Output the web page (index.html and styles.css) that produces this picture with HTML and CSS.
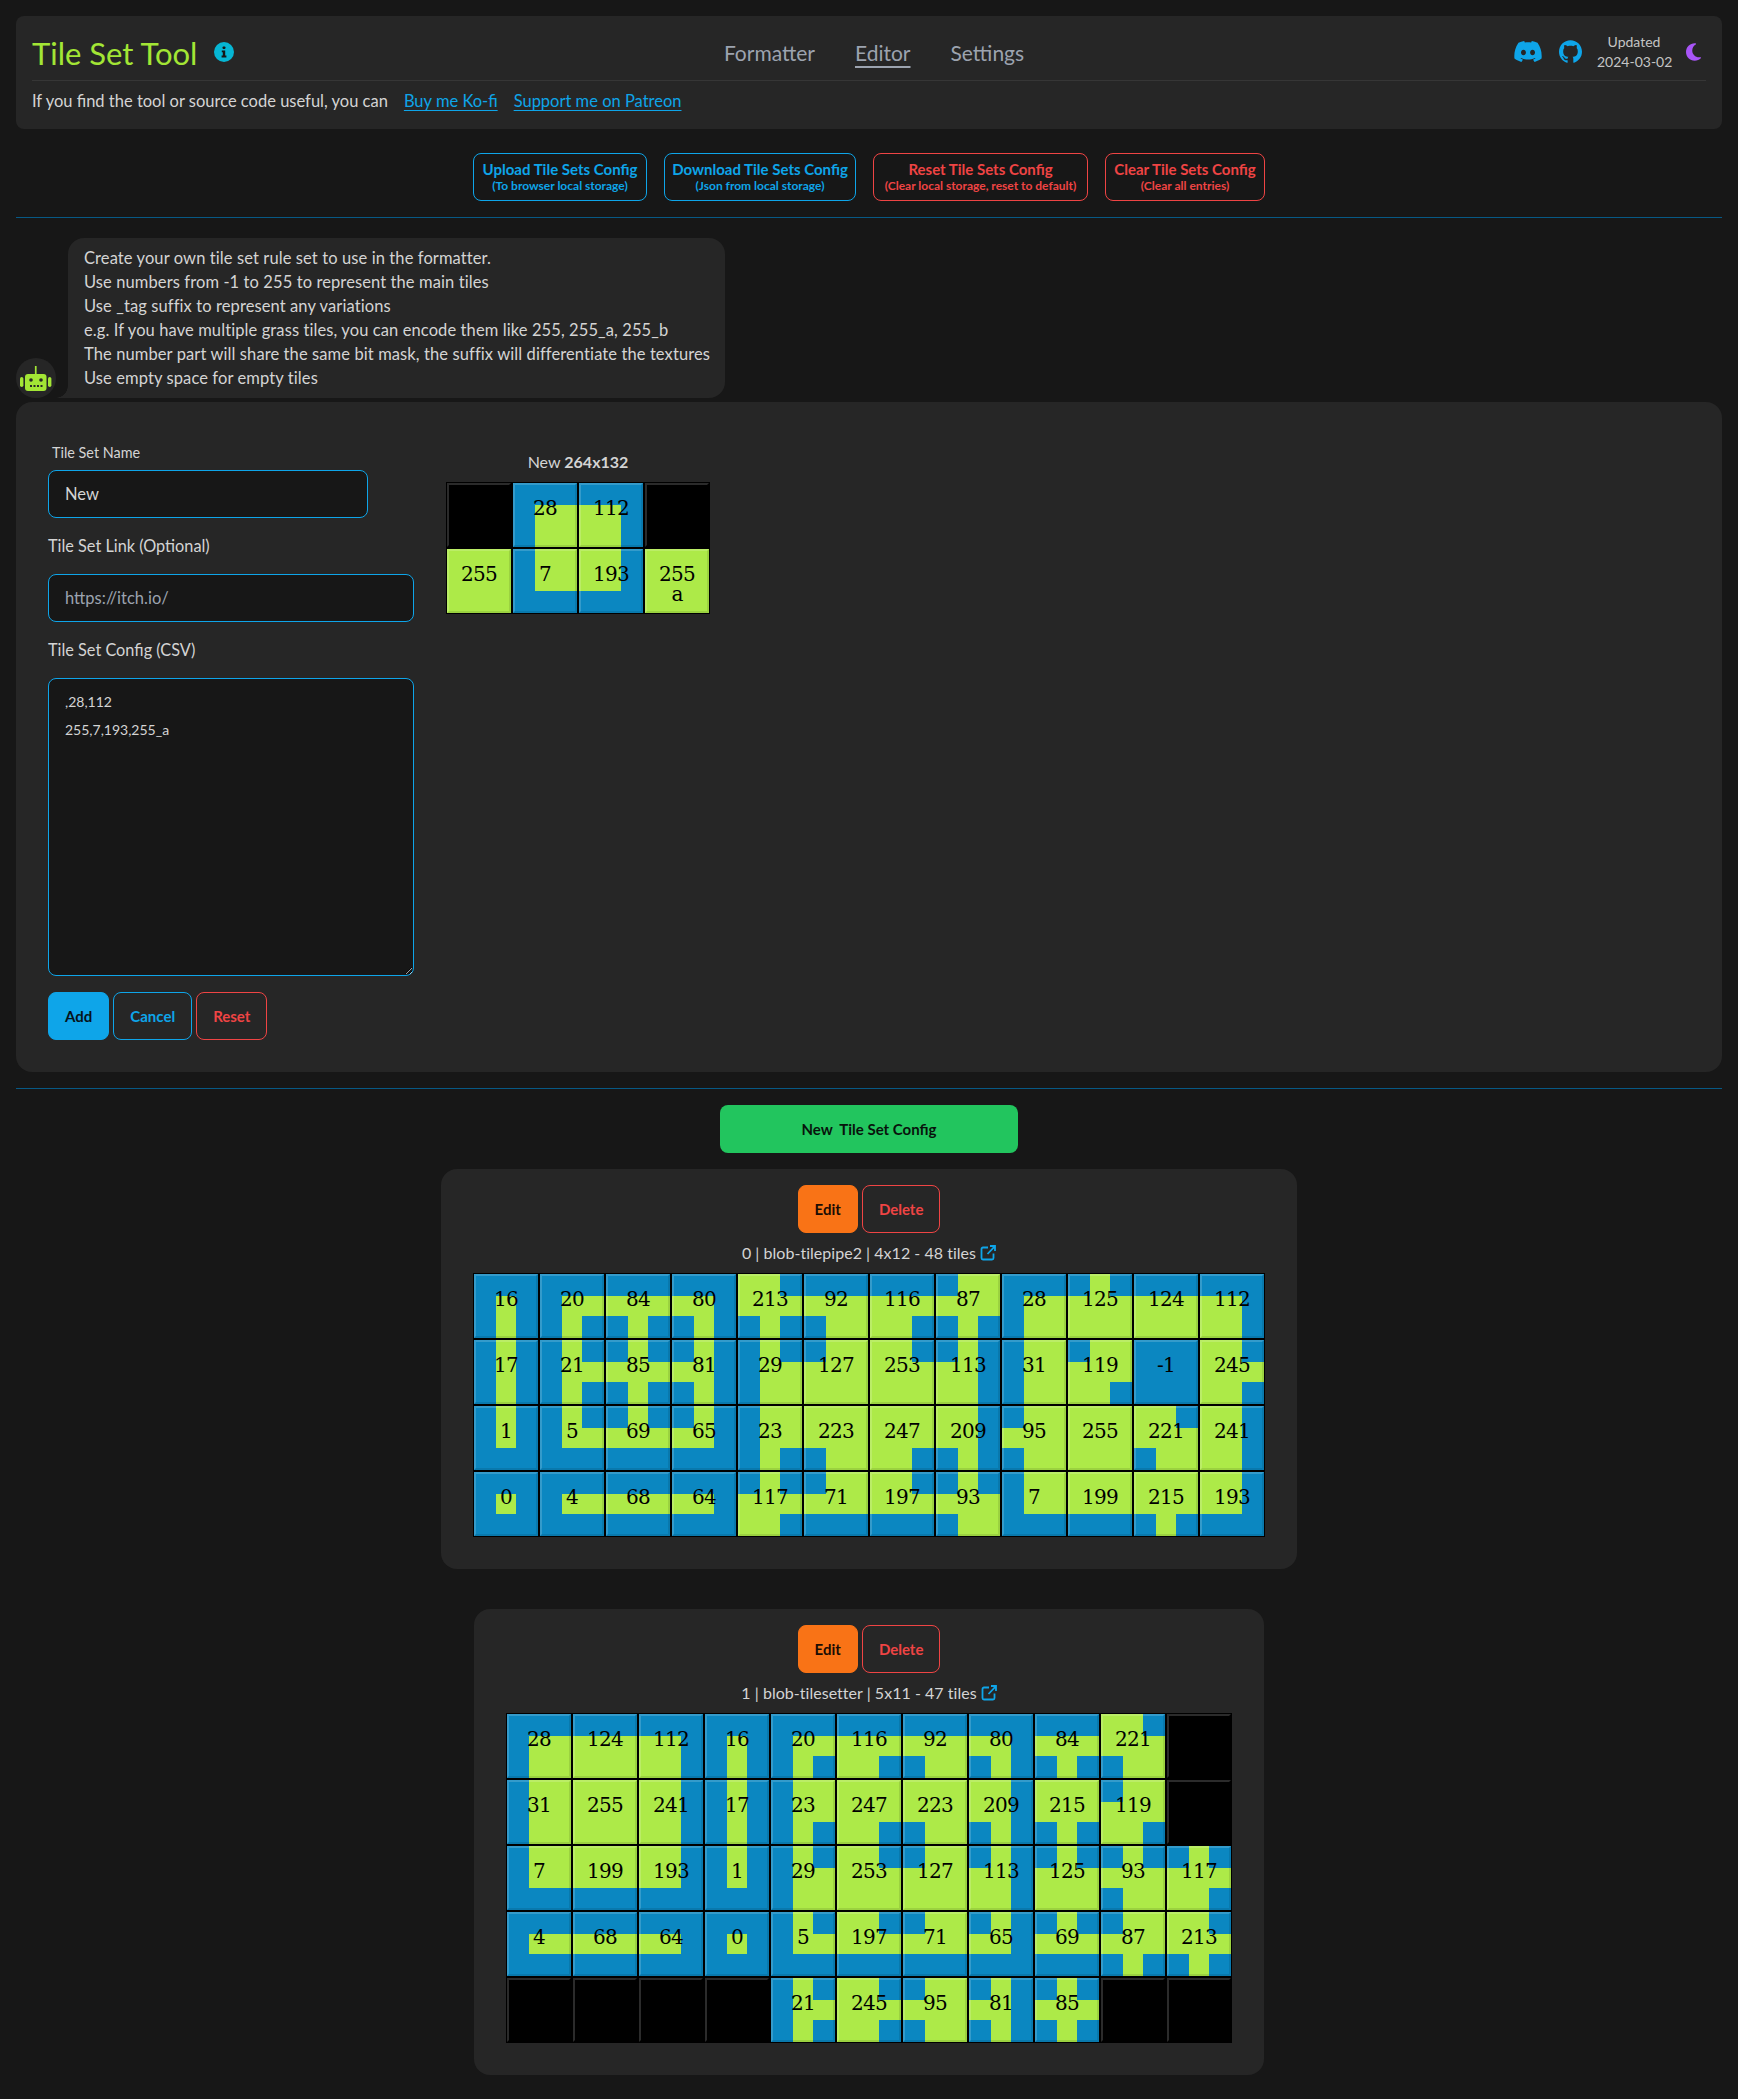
FILE: index.html
```html
<!DOCTYPE html>
<html lang="en">
<head>
<meta charset="utf-8">
<title>Tile Set Tool</title>
<link rel="stylesheet" href="styles.css">
</head>
<body>
<header class="topbar">
  <div class="topbar-main">
    <div class="brand">
      <h1 class="brand-title">Tile Set Tool</h1>
      <svg class="icon-info" viewBox="0 0 20 20"><circle cx="10" cy="10" r="10" fill="#06b6d4"/><rect x="8.6" y="4.4" width="2.8" height="2.6" rx=".8" fill="#171717"/><path d="M7.8 8.4h3.4v5.2h1.2v1.8H7.6v-1.8h1.2v-3.4h-1z" fill="#171717"/></svg>
    </div>
    <nav class="nav">
      <a class="nav-link">Formatter</a>
      <a class="nav-link nav-link-active">Editor</a>
      <a class="nav-link">Settings</a>
    </nav>
    <div class="topbar-right">
      <svg class="icon-discord" viewBox="0 2.8 24 18.4"><path fill="#0ea5e9" d="M20.317 4.3698a19.7913 19.7913 0 00-4.8851-1.5152.0741.0741 0 00-.0785.0371c-.211.3753-.4447.8648-.6083 1.2495-1.8447-.2762-3.68-.2762-5.4868 0-.1636-.3933-.4058-.8742-.6177-1.2495a.077.077 0 00-.0785-.037 19.7363 19.7363 0 00-4.8852 1.515.0699.0699 0 00-.0321.0277C.5334 9.0458-.319 13.5799.0992 18.0578a.0824.0824 0 00.0312.0561c2.0528 1.5076 4.0413 2.4228 5.9929 3.0294a.0777.0777 0 00.0842-.0276c.4616-.6304.8731-1.2952 1.226-1.9942a.076.076 0 00-.0416-.1057c-.6528-.2476-1.2743-.5495-1.8722-.8923a.077.077 0 01-.0076-.1277c.1258-.0943.2517-.1923.3718-.2914a.0743.0743 0 01.0776-.0105c3.9278 1.7933 8.18 1.7933 12.0614 0a.0739.0739 0 01.0785.0095c.1202.099.246.1981.3728.2924a.077.077 0 01-.0066.1276 12.2986 12.2986 0 01-1.873.8914.0766.0766 0 00-.0407.1067c.3604.698.7719 1.3628 1.225 1.9932a.076.076 0 00.0842.0286c1.961-.6067 3.9495-1.5219 6.0023-3.0294a.077.077 0 00.0313-.0552c.5004-5.177-.8382-9.6739-3.5485-13.6604a.061.061 0 00-.0312-.0286zM8.02 15.3312c-1.1825 0-2.1569-1.0857-2.1569-2.419 0-1.3332.9555-2.4189 2.157-2.4189 1.2108 0 2.1757 1.0952 2.1568 2.419 0 1.3332-.9555 2.4189-2.1569 2.4189zm7.9748 0c-1.1825 0-2.1569-1.0857-2.1569-2.419 0-1.3332.9554-2.4189 2.1569-2.4189 1.2108 0 2.1757 1.0952 2.1568 2.419 0 1.3332-.946 2.4189-2.1568 2.4189Z"/></svg>
      <svg class="icon-github" viewBox="0 0 24 24"><path fill="#0ea5e9" d="M12 .297c-6.63 0-12 5.373-12 12 0 5.303 3.438 9.8 8.205 11.385.6.113.82-.258.82-.577 0-.285-.01-1.04-.015-2.04-3.338.724-4.042-1.61-4.042-1.61C4.422 18.07 3.633 17.7 3.633 17.7c-1.087-.744.084-.729.084-.729 1.205.084 1.838 1.236 1.838 1.236 1.07 1.835 2.809 1.305 3.495.998.108-.776.417-1.305.76-1.605-2.665-.3-5.466-1.332-5.466-5.93 0-1.31.465-2.38 1.235-3.22-.135-.303-.54-1.523.105-3.176 0 0 1.005-.322 3.3 1.23.96-.267 1.98-.399 3-.405 1.02.006 2.04.138 3 .405 2.28-1.552 3.285-1.23 3.285-1.23.645 1.653.24 2.873.12 3.176.765.84 1.23 1.91 1.23 3.22 0 4.61-2.805 5.625-5.475 5.92.42.36.81 1.096.81 2.22 0 1.606-.015 2.896-.03 3.286 0 .315.21.69.825.57C20.565 22.092 24 17.592 24 12.297c0-6.627-5.373-12-12-12"/></svg>
      <div class="updated">Updated<br>2024-03-02</div>
      <svg class="icon-moon" viewBox="0 0 384 512"><path fill="#a855f7" d="M223.5 32C100 32 0 132.3 0 256S100 480 223.5 480c60.6 0 115.5-24.2 155.8-63.4c5-4.9 6.3-12.5 3.1-18.7s-10.1-9.7-17-8.5c-9.8 1.7-19.8 2.6-30.1 2.6c-96.9 0-175.5-78.8-175.5-176c0-65.8 36-123.1 89.3-153.3c6.1-3.5 9.2-10.5 7.7-17.3s-7.3-11.9-14.3-12.5c-6.3-.5-12.6-.8-19-.8z"/></svg>
    </div>
  </div>
  <div class="topbar-sub">
    <span>If you find the tool or source code useful, you can</span>
    <a class="link">Buy me Ko-fi</a>
    <a class="link">Support me on Patreon</a>
  </div>
</header>

<section class="actions">
  <button class="btn-config btn-config-sky btn-upload">Upload Tile Sets Config<small>(To browser local storage)</small></button>
  <button class="btn-config btn-config-sky btn-download">Download Tile Sets Config<small>(Json from local storage)</small></button>
  <button class="btn-config btn-config-red btn-reset">Reset Tile Sets Config<small>(Clear local storage, reset to default)</small></button>
  <button class="btn-config btn-config-red btn-clear">Clear Tile Sets Config<small>(Clear all entries)</small></button>
</section>

<hr class="rule">

<section class="chat">
  <div class="avatar">
    <svg viewBox="0 0 40 40" class="avatar-icon">
      <rect x="18.9" y="8" width="1.7" height="9" fill="#a3e635"/>
      <rect x="4" y="19" width="3.4" height="10" rx="1.7" fill="#a3e635"/>
      <rect x="32" y="19" width="3.4" height="10" rx="1.7" fill="#a3e635"/>
      <rect x="9" y="16" width="21.5" height="17" rx="3" fill="#a3e635"/>
      <circle cx="15" cy="22" r="1.8" fill="#262626"/>
      <circle cx="25" cy="22" r="1.8" fill="#262626"/>
      <rect x="14" y="27" width="2" height="2" fill="#262626"/>
      <rect x="17.5" y="27" width="2" height="2" fill="#262626"/>
      <rect x="21" y="27" width="2" height="2" fill="#262626"/>
      <rect x="24.5" y="27" width="2" height="2" fill="#262626"/>
    </svg>
  </div>
  <div class="bubble">
    <p>Create your own tile set rule set to use in the formatter.</p>
    <p>Use numbers from -1 to 255 to represent the main tiles</p>
    <p>Use _tag suffix to represent any variations</p>
    <p>e.g. If you have multiple grass tiles, you can encode them like 255, 255_a, 255_b</p>
    <p>The number part will share the same bit mask, the suffix will differentiate the textures</p>
    <p>Use empty space for empty tiles</p>
  </div>
</section>

<section class="editor">
  <form class="editor-form">
    <label class="label-small" for="f-name">Tile Set Name</label>
    <input id="f-name" class="field field-name" value="New">
    <label class="label" for="f-link">Tile Set Link (Optional)</label>
    <input id="f-link" class="field" placeholder="https://itch.io/">
    <label class="label" for="f-csv">Tile Set Config (CSV)</label>
    <textarea id="f-csv" class="field field-area" spellcheck="false">,28,112
255,7,193,255_a</textarea>
    <div class="form-buttons">
      <button type="button" class="btn btn-sky-solid">Add</button>
      <button type="button" class="btn btn-sky-line">Cancel</button>
      <button type="button" class="btn btn-red-line">Reset</button>
    </div>
  </form>
  <div class="preview">
    <div class="preview-caption">New <b>264x132</b></div>
    <div class="tiles" data-cols="4" data-tiles=",28,112,,255,7,193,255_a"></div>
  </div>
</section>

<hr class="rule rule-second">

<div class="new-row"><button class="btn-new">New&nbsp; Tile Set Config</button></div>

<article class="card">
  <div class="card-buttons">
    <button class="btn btn-orange">Edit</button>
    <button class="btn btn-red-line">Delete</button>
  </div>
  <div class="card-caption">0 | blob-tilepipe2 | 4x12 - 48 tiles
    <svg class="icon-ext" viewBox="0 0 16 16"><path d="M8 2.5H3a1.5 1.5 0 0 0-1.5 1.5v9A1.5 1.5 0 0 0 3 14.5h9a1.5 1.5 0 0 0 1.5-1.5V8.5M7.5 9 15 1.2M10 1h5v5" fill="none" stroke="#0ea5e9" stroke-width="1.8"/></svg>
  </div>
  <div class="tiles" data-cols="12" data-tiles="16,20,84,80,213,92,116,87,28,125,124,112,17,21,85,81,29,127,253,113,31,119,-1,245,1,5,69,65,23,223,247,209,95,255,221,241,0,4,68,64,117,71,197,93,7,199,215,193"></div>
</article>

<article class="card card-last">
  <div class="card-buttons">
    <button class="btn btn-orange">Edit</button>
    <button class="btn btn-red-line">Delete</button>
  </div>
  <div class="card-caption">1 | blob-tilesetter | 5x11 - 47 tiles
    <svg class="icon-ext" viewBox="0 0 16 16"><path d="M8 2.5H3a1.5 1.5 0 0 0-1.5 1.5v9A1.5 1.5 0 0 0 3 14.5h9a1.5 1.5 0 0 0 1.5-1.5V8.5M7.5 9 15 1.2M10 1h5v5" fill="none" stroke="#0ea5e9" stroke-width="1.8"/></svg>
  </div>
  <div class="tiles" data-cols="11" data-tiles="28,124,112,16,20,116,92,80,84,221,,31,255,241,17,23,247,223,209,215,119,,7,199,193,1,29,253,127,113,125,93,117,4,68,64,0,5,197,71,65,69,87,213,,,,,21,245,95,81,85,,"></div>
</article>

<script src="tiles.js"></script>
</body>
</html>
```

FILE: styles.css
```css
* { box-sizing: border-box; }
html, body { margin: 0; }
body {
  padding: 16px 16px 24px;
  background: #171717;
  color: #d4d4d4;
  font-family: Lato, "Noto Sans", sans-serif;
  font-size: 16.5px;
  letter-spacing: .1px;
  line-height: 24px;
}
button, input, textarea { font-family: inherit; }
p { margin: 0; }

.topbar { background: #262626; border-radius: 8px; padding: 0 16px; height: 113px; }
.topbar-main { display: grid; grid-template-columns: 1fr auto 1fr; align-items: center; height: 65px; padding-top: 9px; border-bottom: 1px solid #363636; }
.brand { display: flex; align-items: center; gap: 17px; }
.brand-title { margin: 0; font-size: 31px; line-height: 36px; font-weight: 400; color: #a3e635; letter-spacing: 0; }
.icon-info { width: 20px; height: 20px; margin-top: -2px; }
.nav { display: flex; gap: 40px; margin-left: 10px; }
.nav-link { font-size: 21px; line-height: 28px; color: #9ca3af; letter-spacing: 0; }
.nav-link-active { text-decoration: underline; text-decoration-thickness: 2px; text-underline-offset: 5px; }
.topbar-right { display: flex; align-items: center; justify-content: flex-end; padding-right: 5px; }
.icon-discord { width: 28px; height: 21px; margin-top: -2px; }
.icon-github { width: 23px; height: 23px; margin-left: 17px; margin-top: -2px; }
.updated { font-size: 14px; line-height: 20px; text-align: center; margin-left: 15px; width: 74px; white-space: nowrap; color: #c4c4c4; margin-top: -2px; letter-spacing: 0; }
.icon-moon { width: 15px; height: 20px; margin-left: 15px; margin-top: -2px; }
.topbar-sub { display: flex; align-items: center; height: 40px; letter-spacing: 0; }
.link { color: #0ea5e9; text-decoration: underline; text-underline-offset: 3px; }
.topbar-sub .link { margin-left: 16px; }

.actions { display: flex; justify-content: center; gap: 17px; margin-top: 24px; }
.btn-config {
  display: flex; flex-direction: column; align-items: center; justify-content: center;
  height: 48px; padding: 0; background: transparent; border: 1px solid; border-radius: 8px;
  font-size: 15px; line-height: 18px; font-weight: 700;
}
.btn-config small { font-size: 12px; line-height: 16px; font-weight: 700; }
.btn-upload { width: 174px; }
.btn-download { width: 192px; }
.btn-reset { width: 215px; }
.btn-clear { width: 160px; }
.btn-config-sky { color: #0ea5e9; border-color: #0ea5e9; }
.btn-config-red { color: #ef4444; border-color: #ef4444; }

.rule { border: 0; border-top: 1px solid #075985; margin: 16px 0 20px; }
.rule-second { margin: 16px 0 16px; }

.chat { display: flex; align-items: flex-end; height: 160px; }
.avatar { width: 40px; height: 40px; border-radius: 50%; background: #262626; flex: none; }
.avatar-icon { display: block; width: 40px; height: 40px; }
.bubble { position: relative; margin-left: 12px; width: 657px; height: 160px; padding: 8px 16px; background: #262626; border-radius: 16px 16px 16px 0; white-space: nowrap; }
.bubble::before {
  content: ""; position: absolute; left: -12px; bottom: 0; width: 12px; height: 12px;
  background: radial-gradient(circle at 0 0, transparent 11.5px, #262626 12px);
}

.editor { display: flex; gap: 32px; margin-top: 4px; height: 670px; padding: 41px 32px 0; background: #262626; border-radius: 16px; }
.editor-form { display: flex; flex-direction: column; align-items: flex-start; width: 366px; }
.label-small { font-size: 14.4px; line-height: 20px; margin-left: 4px; height: 20px; letter-spacing: 0; }
.label { font-size: 16.3px; line-height: 24px; margin: 16px 0; letter-spacing: 0; }
.field {
  display: block; width: 366px; height: 48px; padding: 0 16px; background: #171717; color: #d4d4d4;
  border: 1px solid #0ea5e9; border-radius: 8px; font-size: 16.5px; outline: none;
}
.field::placeholder { color: #9ca3af; opacity: 1; }
.field-name { width: 320px; margin-top: 7px; }
.field-area { height: 298px; padding: 9px 16px; font-size: 14px; line-height: 28px; resize: vertical; }
.form-buttons { display: flex; gap: 4px; margin-top: 16px; }
.btn { height: 48px; padding: 0 16px; border-radius: 8px; border: 1px solid transparent; background: transparent; font-size: 15px; font-weight: 700; }
.btn-sky-solid { background: #0ea5e9; border-color: #0ea5e9; color: #06131a; }
.btn-sky-line { border-color: #0ea5e9; color: #0ea5e9; }
.btn-red-line { border-color: #ef4444; color: #ef4444; }
.btn-orange { background: #f97316; border-color: #f97316; color: #1a0d04; }

.preview { width: 264px; padding-top: 7px; }
.preview-caption { text-align: center; margin-bottom: 8px; font-size: 16px; letter-spacing: 0; }

.new-row { display: flex; justify-content: center; }
.btn-new { width: 298px; height: 48px; background: #22c55e; border: 0; border-radius: 8px; color: #08130c; font-size: 15px; font-weight: 700; }

.card { width: fit-content; margin: 16px auto 40px; padding: 16px 32px 32px; background: #262626; border-radius: 16px; }
.card-last { margin-bottom: 0; }
.card-buttons { display: flex; justify-content: center; gap: 4px; }
.card-caption { display: flex; align-items: center; justify-content: center; gap: 4px; height: 24px; margin: 8px 0; font-size: 16px; letter-spacing: .03px; }
.icon-ext { width: 16px; height: 16px; }

.tiles { display: grid; grid-auto-rows: 66px; grid-template-columns: repeat(var(--cols), 66px); font-family: "DejaVu Serif", serif; }
.tile { position: relative; width: 66px; height: 66px; display: grid; grid-template-columns: 22px 20px 22px; grid-template-rows: 22px 20px 22px; border: 1px solid #000; background: #0b87c1; }
.tile-empty { background: #000; }
.tile::after {
  content: ""; position: absolute; inset: 0; border: 2px solid;
  border-color: rgba(255,255,255,.17) rgba(0,0,0,.1) rgba(0,0,0,.1) rgba(255,255,255,.17);
}
.sub-on { background: #adea48; }
.tile-label { position: absolute; z-index: 1; left: 0; right: 0; top: 15px; text-align: center; color: #000; font-size: 20px; line-height: 20px; letter-spacing: -.7px; }
```

FILE: tiles.js
```js
// Renders the 3x3 blob tiles from their 8-bit neighbour masks.
const N = 1, NE = 2, E = 4, SE = 8, S = 16, SW = 32, W = 64, NW = 128;

function subCells(mask) {
  const on = (bit) => (mask & bit) !== 0;
  return [
    on(NW), on(N), on(NE),
    on(W), true, on(E),
    on(SW), on(S), on(SE),
  ];
}

function makeTile(code) {
  const tile = document.createElement('div');
  tile.className = 'tile';
  if (code === '') {
    tile.classList.add('tile-empty');
    return tile;
  }
  const mask = parseInt(code, 10);
  if (mask >= 0) {
    subCells(mask).forEach((isOn) => {
      const sub = document.createElement('div');
      if (isOn) sub.className = 'sub-on';
      tile.appendChild(sub);
    });
  }
  const label = document.createElement('div');
  label.className = 'tile-label';
  code.split('_').forEach((part, i) => {
    if (i) label.appendChild(document.createElement('br'));
    label.appendChild(document.createTextNode(part));
  });
  tile.appendChild(label);
  return tile;
}

document.querySelectorAll('.tiles').forEach((grid) => {
  grid.style.setProperty('--cols', grid.dataset.cols);
  grid.dataset.tiles.split(',').forEach((code) => grid.appendChild(makeTile(code)));
});
```
